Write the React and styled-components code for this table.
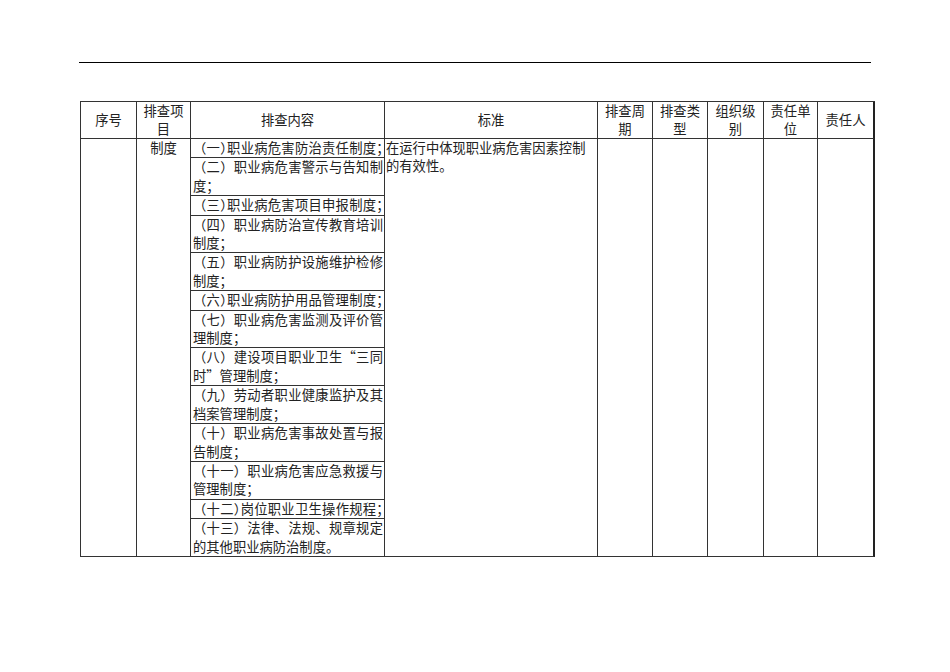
import React from "react";
import styled, { createGlobalStyle } from "styled-components";

const GlobalStyle = createGlobalStyle`
  body {
    margin: 0;
    background: #fff;
    color: #222;
    font-family: "Noto Sans CJK SC", "Liberation Serif", serif;
  }
`;

const Page = styled.div`
  padding: 62px 0 40px 79px;
`;

const Rule = styled.div`
  width: 792px;
  border-top: 1px solid #000;
`;

const Sheet = styled.div`
  display: grid;
  grid-template-columns: 56px 54px 194px 213px 55px 55px 56px 54px 57px;
  width: max-content;
  margin: 38px 0 0 1px;
  border-top: 1px solid #333;
  border-left: 1px solid #333;
  font-size: 13.3px;
`;

const Cell = styled.div`
  box-sizing: border-box;
  border-right: ${(p) => (p.$last ? "2px solid #222" : "1px solid #333")};
  border-bottom: 1px solid #333;
`;

const HeadCell = styled(Cell)`
  height: 37px;
  display: flex;
  align-items: center;
  justify-content: center;
  text-align: center;
  line-height: 18px;
`;

const BodyCell = styled(Cell)`
  line-height: 18.4px;
  text-align: ${(p) => p.$align || "left"};
  padding: ${(p) => p.$pad || "0"};
`;

const Stack = styled.div`
  display: flex;
  flex-direction: column;
`;

const Item = styled.div`
  padding: 0 1px 0 2px;
  border-bottom: 1px solid #333;

  &:last-child {
    border-bottom: none;
  }
`;

const Line = styled.span`
  display: block;
  text-align: left;
  text-align-last: ${(p) => (p.$full ? "justify" : "left")};
`;

const Half = styled.span`
  font-feature-settings: "halt";
`;

const headers = [
  ["序号"],
  ["排查项", "目"],
  ["排查内容"],
  ["标准"],
  ["排查周", "期"],
  ["排查类", "型"],
  ["组织级", "别"],
  ["责任单", "位"],
  ["责任人"],
];

const rules = [
  { lines: ["（一）职业病危害防治责任制度；"], tight: true },
  { lines: ["（二）职业病危害警示与告知制", "度；"] },
  { lines: ["（三）职业病危害项目申报制度；"], tight: true },
  { lines: ["（四）职业病防治宣传教育培训", "制度；"] },
  { lines: ["（五）职业病防护设施维护检修", "制度；"] },
  { lines: ["（六）职业病防护用品管理制度；"], tight: true },
  { lines: ["（七）职业病危害监测及评价管", "理制度；"] },
  { lines: ["（八）建设项目职业卫生“三同", "时”管理制度；"] },
  { lines: ["（九）劳动者职业健康监护及其", "档案管理制度；"] },
  { lines: ["（十）职业病危害事故处置与报", "告制度；"] },
  { lines: ["（十一）职业病危害应急救援与", "管理制度；"] },
  { lines: ["（十二）岗位职业卫生操作规程；"], tight: true },
  { lines: ["（十三）法律、法规、规章规定", "的其他职业病防治制度。"] },
];

// squeeze closing paren and semicolon on lines that must fit on one row
const squeeze = (text) =>
  text.split(/([）；])/).map((part, i) =>
    part === "）" || part === "；" ? <Half key={i}>{part}</Half> : part
  );

export default function App() {
  return (
    <Page>
      <GlobalStyle />
      <Rule />
      <Sheet>
        {headers.map((h, i) => (
          <HeadCell key={i} $last={i === headers.length - 1}>
            <div>
              {h.map((t, j) => (
                <div key={j}>{t}</div>
              ))}
            </div>
          </HeadCell>
        ))}

        <BodyCell />
        <BodyCell $align="center">制度</BodyCell>
        <BodyCell>
          <Stack>
            {rules.map((r, i) => (
              <Item key={i}>
                {r.lines.map((l, j) => (
                  <Line key={j} $full={j < r.lines.length - 1 || r.tight}>
                    {r.tight ? squeeze(l) : l}
                  </Line>
                ))}
              </Item>
            ))}
          </Stack>
        </BodyCell>
        <BodyCell $pad="0 2px 0 1px">
          在运行中体现职业病危害因素控制
          <br />
          的有效性。
        </BodyCell>
        <BodyCell />
        <BodyCell />
        <BodyCell />
        <BodyCell />
        <BodyCell $last />
      </Sheet>
    </Page>
  );
}
